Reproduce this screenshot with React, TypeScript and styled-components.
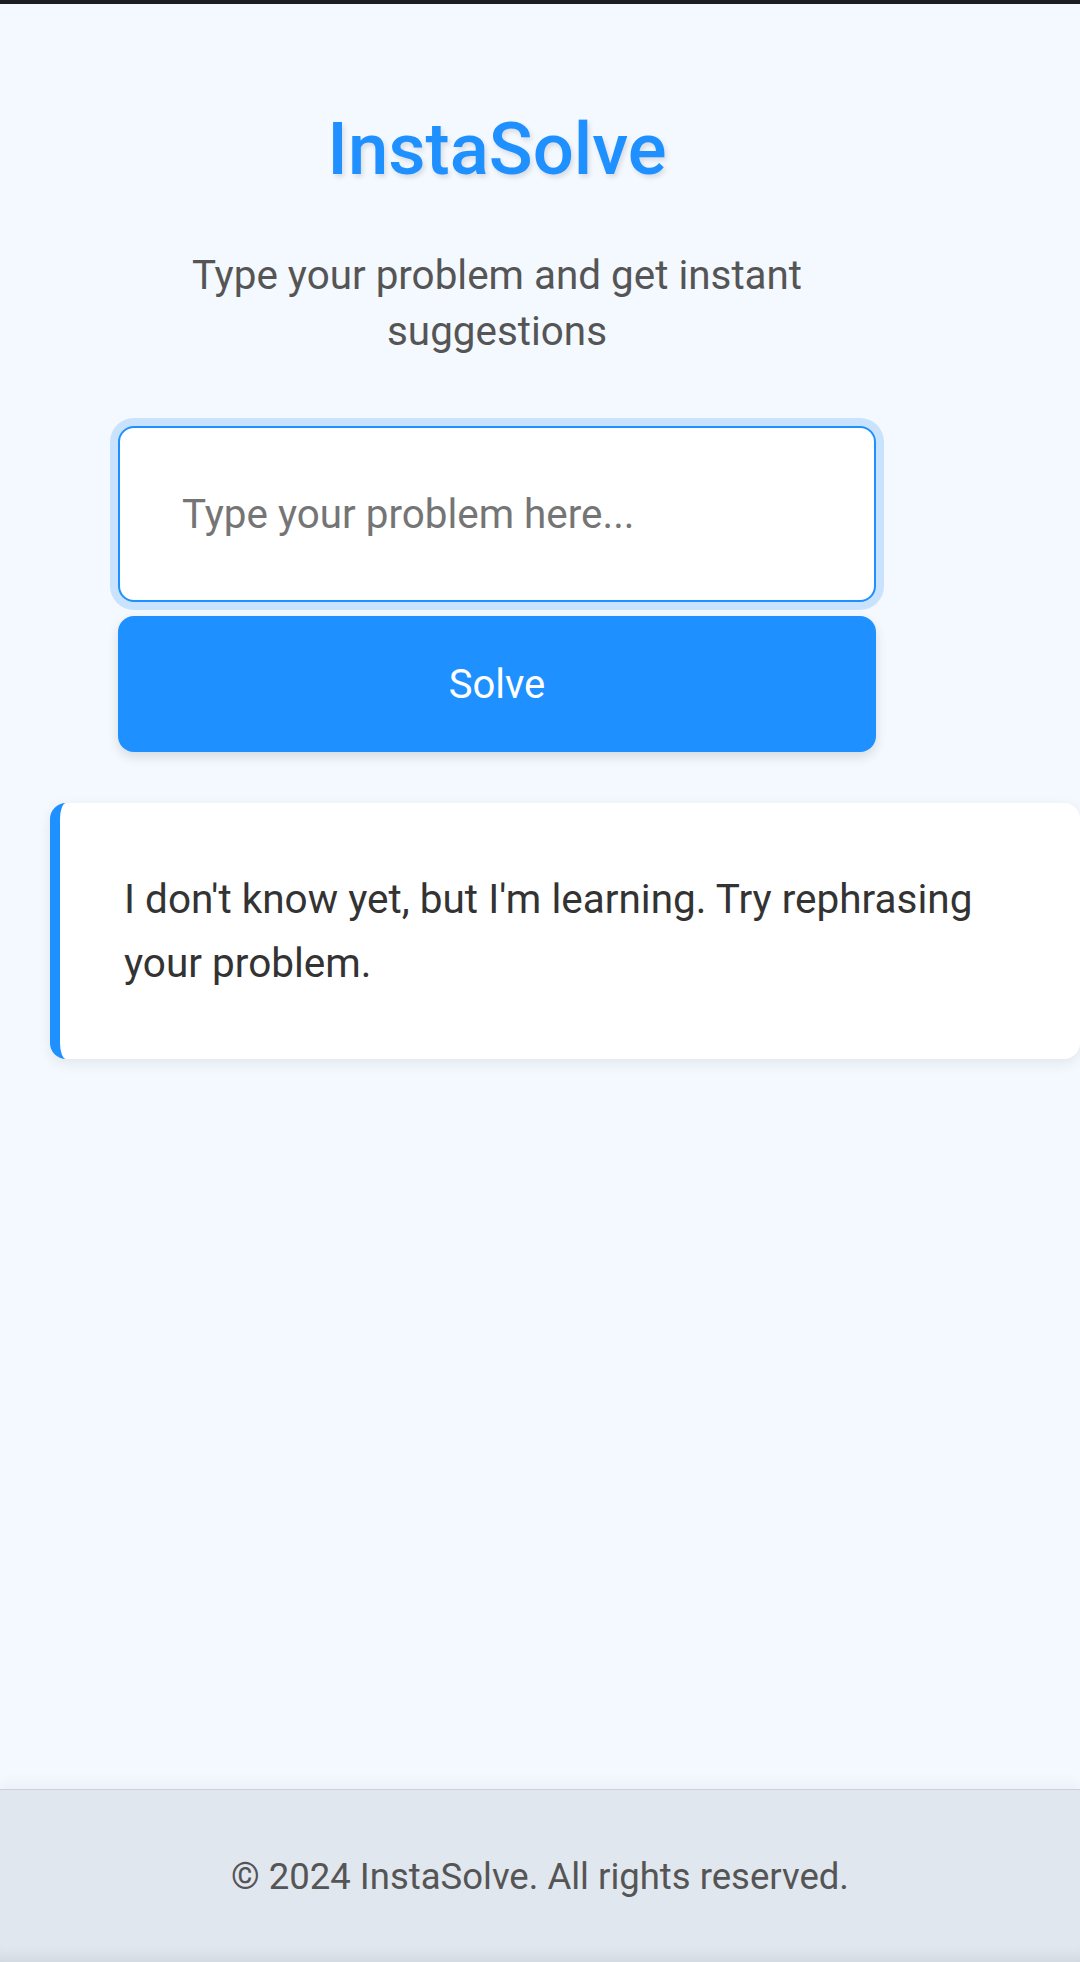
import React from "react";
import styled, { createGlobalStyle } from "styled-components";

const GlobalStyle = createGlobalStyle`
  * { box-sizing: border-box; }
  html, body { margin: 0; padding: 0; }
  body {
    background: #f4f8ff;
    font-family: Roboto, "Noto Sans", "Liberation Sans", sans-serif;
    overflow-x: hidden;
  }
`;

const Page = styled.div`
  min-height: 100vh;
  display: flex;
  flex-direction: column;
  background: #f4f8ff;
  overflow-x: hidden;
`;

const TopBar = styled.div`
  height: 4px;
  background: #1c1d21;
  flex-shrink: 0;
`;

const Main = styled.main`
  flex: 1;
  display: flex;
  flex-direction: column;
  padding: 102px 0 0 50px;
`;

const Hero = styled.section`
  width: 894px;
  display: flex;
  flex-direction: column;
  align-items: center;
`;

const Title = styled.h1`
  margin: 0;
  font-size: 72.5px;
  font-weight: 500;
  line-height: 87px;
  color: #1e90ff;
  text-shadow: 2px 3px 5px rgba(0, 0, 0, 0.12);
`;

const Subtitle = styled.p`
  margin: 55px 0 0;
  width: 700px;
  text-align: center;
  font-size: 40.4px;
  line-height: 56px;
  color: #555555;
`;

const Form = styled.form`
  width: 758px;
  margin-top: 66px;
  display: flex;
  flex-direction: column;
  gap: 14px;
`;

const Input = styled.input`
  height: 176px;
  width: 100%;
  padding: 0 62px;
  border: 2px solid #1e90ff;
  border-radius: 16px;
  background: #ffffff;
  box-shadow: 0 0 0 8px rgba(30, 144, 255, 0.2);
  font-family: inherit;
  font-size: 40.4px;
  color: #333;
  outline: none;
  &::placeholder {
    color: #757575;
  }
`;

const Button = styled.button`
  height: 136px;
  width: 100%;
  border: none;
  border-radius: 16px;
  background: #1e90ff;
  color: #ffffff;
  font-family: inherit;
  font-size: 40px;
  box-shadow: 0 5px 12px rgba(0, 0, 0, 0.12);
  cursor: pointer;
`;

const ResultCard = styled.div`
  margin-top: 51px;
  align-self: stretch;
  background: #ffffff;
  border-left: 10px solid #1e90ff;
  border-radius: 16px;
  padding: 64px;
  box-shadow: 0 4px 14px rgba(0, 0, 0, 0.08);
`;

const ResultText = styled.p`
  margin: 0;
  font-size: 40.5px;
  line-height: 64px;
  color: #333333;
`;

const Footer = styled.footer`
  height: 173px;
  flex-shrink: 0;
  display: flex;
  align-items: center;
  justify-content: center;
  background: #e1e7ef;
  border-top: 1px solid #c9d1dc;
  box-shadow: 0 -6px 14px rgba(0, 0, 0, 0.04),
    inset 0 -14px 14px -10px rgba(0, 0, 0, 0.08);
  font-size: 36.5px;
  color: #555555;
`;

export default function App() {
  return (
    <Page>
      <GlobalStyle />
      <TopBar />
      <Main>
        <Hero>
          <Title>InstaSolve</Title>
          <Subtitle>Type your problem and get instant suggestions</Subtitle>
          <Form onSubmit={(e) => e.preventDefault()}>
            <Input type="text" placeholder="Type your problem here..." />
            <Button type="submit">Solve</Button>
          </Form>
        </Hero>
        <ResultCard>
          <ResultText>
            I don't know yet, but I'm learning. Try rephrasing your problem.
          </ResultText>
        </ResultCard>
      </Main>
      <Footer>© 2024 InstaSolve. All rights reserved.</Footer>
    </Page>
  );
}
